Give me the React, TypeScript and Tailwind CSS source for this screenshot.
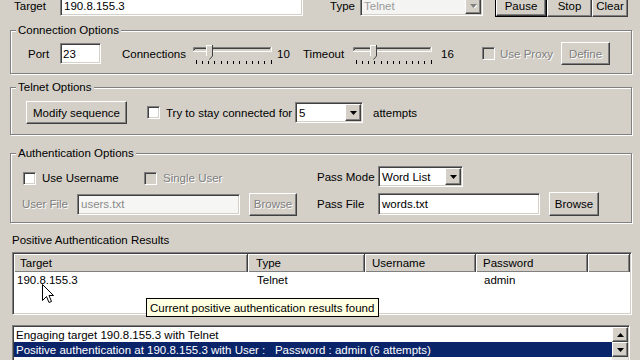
import React from "react";

const sunken =
  "border border-t-[#808080] border-l-[#808080] border-b-white border-r-white shadow-[inset_1px_1px_0_#404040,inset_-1px_-1px_0_#d4d0c8]";
const raised =
  "border border-t-white border-l-white border-b-[#404040] border-r-[#404040] shadow-[inset_-1px_-1px_0_#808080] bg-[#d4d0c8]";
const group =
  "w-[622px] flex flex-col border border-[#808080] shadow-[inset_1px_1px_0_#fff,1px_1px_0_#fff]";
const legend = "-mt-[8px] ml-[5px] px-[2px] h-[14px] w-fit bg-[#d4d0c8]";
const grayText = "text-[#808080] [text-shadow:1px_1px_0_#fff]";

function Btn({
  label,
  className,
  disabled,
  primary,
}: {
  label: string;
  className: string;
  disabled?: boolean;
  primary?: boolean;
}) {
  return (
    <div
      className={`${className} shrink-0 flex items-center justify-center ${
        primary ? "border border-black" : ""
      }`}
    >
      <div
        className={`${raised} w-full h-full flex items-center justify-center ${
          disabled ? grayText : ""
        }`}
      >
        {label}
      </div>
    </div>
  );
}

function Arrow({ up, disabled }: { up?: boolean; disabled?: boolean }) {
  return (
    <svg width="7" height="4" viewBox="0 0 7 4">
      {disabled && <path d={up ? "M1 5L4.5 1.5L8 5Z" : "M1 1H8L4.5 4.5Z"} fill="#fff" />}
      <path
        d={up ? "M0 4L3.5 0L7 4Z" : "M0 0H7L3.5 4Z"}
        fill={disabled ? "#808080" : "#000"}
      />
    </svg>
  );
}

function Combo({
  value,
  className,
  disabled,
}: {
  value: string;
  className: string;
  disabled?: boolean;
}) {
  return (
    <div className={`${className} ${sunken} shrink-0 flex p-[1px] ${disabled ? "bg-[#f4f4f2]" : "bg-white"}`}>
      <div className={`flex-1 flex items-center pl-[2px] ${disabled ? "text-[#9a9a9a]" : ""}`}>{value}</div>
      <div className={`${raised} w-[16px] h-full flex items-center justify-center`}>
        <Arrow disabled={disabled} />
      </div>
    </div>
  );
}

function Check({ disabled }: { disabled?: boolean }) {
  return (
    <div
      className={`w-[13px] h-[13px] shrink-0 ${sunken} ${disabled ? "bg-[#d4d0c8]" : "bg-white"}`}
    />
  );
}

function Slider({ pos }: { pos: number }) {
  const ticks = Array.from({ length: 13 }, (_, i) => 2.5 + i * 6.25);
  return (
    <svg width="80" height="23" viewBox="0 0 80 23" className="shrink-0">
      <path d="M0.5 9V5.5H78" stroke="#808080" fill="none" />
      <path d="M1.5 8V6.5H77" stroke="#404040" fill="none" />
      <path d="M0 9.5H78.5V5" stroke="#fff" fill="none" />
      <path
        d={`M${pos} 3H${pos + 6}V14L${pos + 3} 17L${pos} 14Z`}
        fill="#d4d0c8"
      />
      <path d={`M${pos + 0.5} 14V3.5H${pos + 6}`} stroke="#fff" fill="none" />
      <path d={`M${pos + 6.5} 3V14L${pos + 3.5} 17.5`} stroke="#404040" fill="none" />
      {ticks.map((x, i) => (
        <path
          key={i}
          d={`M${Math.round(x) + 0.5} ${i === 0 || i === 12 ? 18 : 19}V22`}
          stroke="#000"
        />
      ))}
    </svg>
  );
}

export default function App() {
  return (
    <div className="w-[640px] h-[360px] overflow-hidden bg-[#d4d0c8] relative font-['Liberation_Sans',Arial,sans-serif] text-[11.5px] leading-[14px] text-black whitespace-nowrap">
      <div className="flex flex-col pl-[10px]">
        {/* target row */}
        <div className="flex items-center h-[23px] -mt-[6px]">
          <div className="ml-[4px] w-[46px] shrink-0">Target</div>
          <div className={`${sunken} w-[243px] h-[21px] bg-white flex items-center pl-[3px] shrink-0`}>
            190.8.155.3
          </div>
          <div className="ml-[27px] w-[30px] shrink-0">Type</div>
          <Combo value="Telnet" className="w-[123px] h-[21px]" disabled />
          <div className="ml-[12px] flex">
            <Btn label="Pause" className="w-[52px] h-[23px]" primary />
            <Btn label="Stop" className="w-[45px] h-[23px]" />
            <Btn label="Clear" className="w-[36px] h-[23px]" />
          </div>
        </div>

        {/* connection options */}
        <div className={`${group} mt-[13px]`}>
          <div className={legend}>Connection Options</div>
          <div className="flex items-center h-[23px] mt-[5px] mb-[8px] pl-[17px]">
            <div className="w-[32px] shrink-0">Port</div>
            <div className={`${sunken} w-[41px] h-[21px] bg-white flex items-center pl-[2px] shrink-0`}>23</div>
            <div className="ml-[21px] w-[71px] shrink-0">Connections</div>
            <Slider pos={13} />
            <div className="ml-[4px] w-[26px] shrink-0">10</div>
            <div className="w-[50px] shrink-0">Timeout</div>
            <Slider pos={17} />
            <div className="ml-[8px] w-[41px] shrink-0">16</div>
            <Check disabled />
            <div className={`ml-[5px] w-[61px] shrink-0 ${grayText}`}>Use Proxy</div>
            <Btn label="Define" className="w-[49px] h-[23px]" disabled />
          </div>
        </div>

        {/* telnet options */}
        <div className={`${group} mt-[13px]`}>
          <div className={legend}>Telnet Options</div>
          <div className="flex items-center h-[23px] mt-[7px] mb-[10px] pl-[15px]">
            <Btn label="Modify sequence" className="w-[101px] h-[23px]" />
            <div className="ml-[20px]">
              <Check />
            </div>
            <div className="ml-[6px] w-[129px] shrink-0">Try to stay connected for</div>
            <Combo value="5" className="w-[68px] h-[21px]" />
            <div className="ml-[10px]">attempts</div>
          </div>
        </div>

        {/* authentication options */}
        <div className={`${group} mt-[18px]`}>
          <div className={legend}>Authentication Options</div>
          <div className="flex items-center h-[21px] mt-[6px] pl-[12px]">
            <div className="mt-[3px]">
              <Check />
            </div>
            <div className="ml-[6px] w-[102px] shrink-0 mt-[2px]">Use Username</div>
            <div className="mt-[3px]">
              <Check disabled />
            </div>
            <div className={`ml-[6px] w-[154px] shrink-0 mt-[2px] ${grayText}`}>Single User</div>
            <div className="w-[61px] shrink-0">Pass Mode</div>
            <Combo value="Word List" className="w-[85px] h-[21px]" />
          </div>
          <div className="flex items-center h-[24px] mt-[5px] mb-[6px] pl-[11px]">
            <div className={`w-[55px] shrink-0 ${grayText}`}>User File</div>
            <div className={`${sunken} w-[163px] h-[21px] bg-[#f6f6f4] text-[#8a8a8a] flex items-center pl-[3px] shrink-0`}>
              users.txt
            </div>
            <div className="ml-[9px]">
              <Btn label="Browse" className="w-[48px] h-[23px]" disabled />
            </div>
            <div className="ml-[20px] w-[61px] shrink-0">Pass File</div>
            <div className={`${sunken} w-[162px] h-[22px] bg-white flex items-center pl-[3px] shrink-0`}>
              words.txt
            </div>
            <div className="ml-[9px]">
              <Btn label="Browse" className="w-[50px] h-[24px]" />
            </div>
          </div>
        </div>

        {/* results */}
        <div className="mt-[10px] ml-[2px] h-[14px]">Positive Authentication Results</div>
        <div className={`${sunken} mt-[5px] ml-[2px] w-[620px] h-[63px] bg-white flex flex-col p-[1px]`}>
          <div className="flex h-[18px] bg-[#d4d0c8] shrink-0">
            {[
              ["Target", "w-[234px] pl-[6px]"],
              ["Type", "w-[117px] pl-[8px]"],
              ["Username", "w-[111px] pl-[7px]"],
              ["Password", "w-[112px] pl-[7px]"],
              ["", "flex-1"],
            ].map(([t, c], i) => (
              <div
                key={i}
                className={`${c} shrink-0 flex items-center border-r border-r-[#404040] shadow-[inset_1px_1px_0_#fff,inset_-1px_-1px_0_#808080]`}
              >
                {t}
              </div>
            ))}
          </div>
          <div className="flex h-[16px] items-center">
            <div className="w-[234px] pl-[3px] shrink-0">190.8.155.3</div>
            <div className="w-[117px] pl-[9px] shrink-0">Telnet</div>
            <div className="w-[111px] shrink-0" />
            <div className="w-[112px] pl-[8px] shrink-0">admin</div>
          </div>
        </div>

        {/* log */}
        <div className={`${sunken} mt-[10px] ml-[2px] w-[618px] h-[40px] bg-white flex p-[1px]`}>
          <div className="flex-1 flex flex-col">
            <div className="h-[15px] flex items-center pl-[2px]">Engaging target 190.8.155.3 with Telnet</div>
            <div className="h-[15px] flex items-center pl-[2px] bg-[#0a246a] text-white whitespace-pre">
              Positive authentication at 190.8.155.3 with User :   Password : admin (6 attempts)
            </div>
          </div>
          <div className="w-[16px] flex flex-col bg-[#e8e6e0]">
            <div className={`${raised} h-[15px] flex items-center justify-center`}>
              <Arrow up />
            </div>
            <div className={`${raised} h-[15px] flex items-center justify-center`}>
              <Arrow />
            </div>
          </div>
        </div>
      </div>

      {/* tooltip */}
      <div className="absolute left-[146px] top-[298px] h-[19px] w-[233px] bg-[#ffffe1] border border-black flex items-center pl-[3px]">
        Current positive authentication results found
      </div>

      {/* mouse cursor */}
      <svg className="absolute left-[42px] top-[284px]" width="12" height="20" viewBox="0 0 12 20">
        <path
          d="M0.5 0.5V16.5L4.5 12.5L7 18.5L9.5 17.5L7 11.5H11.5Z"
          fill="#fff"
          stroke="#000"
          strokeLinejoin="round"
        />
      </svg>
    </div>
  );
}
